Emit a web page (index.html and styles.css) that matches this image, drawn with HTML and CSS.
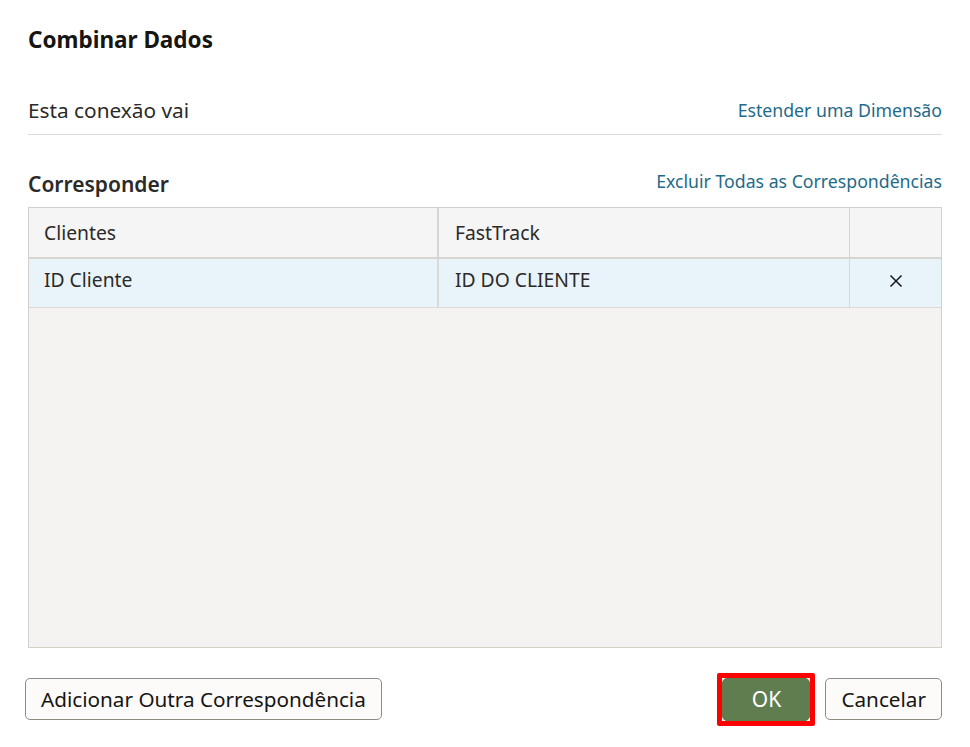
FILE: index.html
```html
<!DOCTYPE html>
<html lang="pt">
<head>
<meta charset="utf-8">
<title>Combinar Dados</title>
<link rel="stylesheet" href="styles.css">
</head>
<body>
<div class="dialog">
  <h1 class="title">Combinar Dados</h1>
  <div class="conn-row">
    <span class="conn-label">Esta conexão vai</span>
    <a class="link" href="#">Estender uma Dimensão</a>
  </div>
  <div class="match-head">
    <span class="section-label">Corresponder</span>
    <a class="link" href="#">Excluir Todas as Correspondências</a>
  </div>
  <div class="grid">
    <div class="grid-header">
      <div class="cell col-a">Clientes</div>
      <div class="cell col-b">FastTrack</div>
      <div class="cell col-c"></div>
    </div>
    <div class="grid-row">
      <div class="cell col-a">ID Cliente</div>
      <div class="cell col-b">ID DO CLIENTE</div>
      <div class="cell col-c">
        <svg class="x-icon" width="16" height="16" viewBox="0 0 16 16"><path d="M2.5 2.5 L13.5 13.5 M13.5 2.5 L2.5 13.5" stroke="#161513" stroke-width="1.5" fill="none"/></svg>
      </div>
    </div>
    <div class="grid-empty"></div>
  </div>
  <div class="footer">
    <button class="btn">Adicionar Outra Correspondência</button>
    <div class="footer-right">
      <span class="highlight"><button class="btn btn-primary">OK</button></span>
      <button class="btn">Cancelar</button>
    </div>
  </div>
</div>
</body>
</html>
```
FILE: styles.css
```css
* { box-sizing: border-box; }
html, body { margin: 0; padding: 0; background: #fff; }
body {
  font-family: "Noto Sans", "Open Sans", "Liberation Sans", sans-serif;
  color: #161513;
}
.dialog {
  width: 970px;
  height: 747px;
  padding: 25px 28px 0 28px;
  display: flex;
  flex-direction: column;
}
.title {
  margin: 0;
  font-size: 22.5px;
  font-weight: 700;
  line-height: 30px;
  height: 30px;
}
.conn-row {
  margin-top: 41px;
  display: flex;
  justify-content: space-between;
  align-items: center;
  height: 39px;
  padding-bottom: 10px;
  border-bottom: 1px solid #dfdcd8;
}
.conn-label { font-size: 20.8px; color: #2b2a28; }
.link {
  color: #1e6b8a;
  text-decoration: none;
  font-size: 17.7px;
}
.match-head {
  margin-top: 34px;
  display: flex;
  justify-content: space-between;
  align-items: center;
  height: 26px;
}
.section-label {
  font-size: 21px;
  font-weight: 600;
  color: #2b2a28;
  margin-top: 3px;
}
.match-head .link { margin-top: -2px; }
.grid {
  margin-top: 12px;
  height: 441px;
  border: 1px solid #d3d0cc;
  background: #f4f3f1;
  display: flex;
  flex-direction: column;
}
.grid-header {
  display: flex;
  height: 51px;
  background: #f5f5f5;
  border-bottom: 2px solid #d8d5d1;
}
.grid-row {
  display: flex;
  height: 49px;
  background: #e8f3fa;
  border-bottom: 1px solid #dcdad7;
}
.cell {
  display: flex;
  align-items: center;
  font-size: 19.3px;
  color: #2b2a28;
  padding-left: 15px;
}
.grid-header .cell { padding-bottom: 0; }
.grid-row .cell { padding-bottom: 7px; }
.grid-row .col-c { padding-bottom: 4px; }
.col-a { width: 410px; }
.col-b { width: 411px; padding-left: 16px; }
.col-c { flex: 1; justify-content: center; padding-left: 0; }
.grid-header .col-a { border-right: 2px solid #d8d5d1; }
.grid-header .col-b { border-right: 1px solid #d8d5d1; }
.grid-row .col-a { border-right: 2px solid #dcdad7; }
.grid-row .col-b { border-right: 1px solid #dcdad7; }
.x-icon { display: block; }
.grid-empty { flex: 1; }
.footer {
  margin-top: 30px;
  margin-left: -3px;
  display: flex;
  justify-content: space-between;
  align-items: center;
}
.footer-right {
  display: flex;
  align-items: center;
  gap: 10px;
}
.btn {
  font-family: inherit;
  font-size: 20.7px;
  color: #161513;
  background: #fcfbfa;
  border: 1px solid #8e8b87;
  border-radius: 5px;
  height: 42px;
  padding: 0 15px;
  cursor: pointer;
}
.highlight {
  display: inline-flex;
  border: 5px solid #ff0000;
  border-radius: 2px;
  margin: -6px 0;
}
.btn-primary {
  background: #5f7d4f;
  border-color: #5f7d4f;
  color: #fff;
  width: 88px;
  height: 43px;
  font-size: 21px;
  padding: 0;
}
```
